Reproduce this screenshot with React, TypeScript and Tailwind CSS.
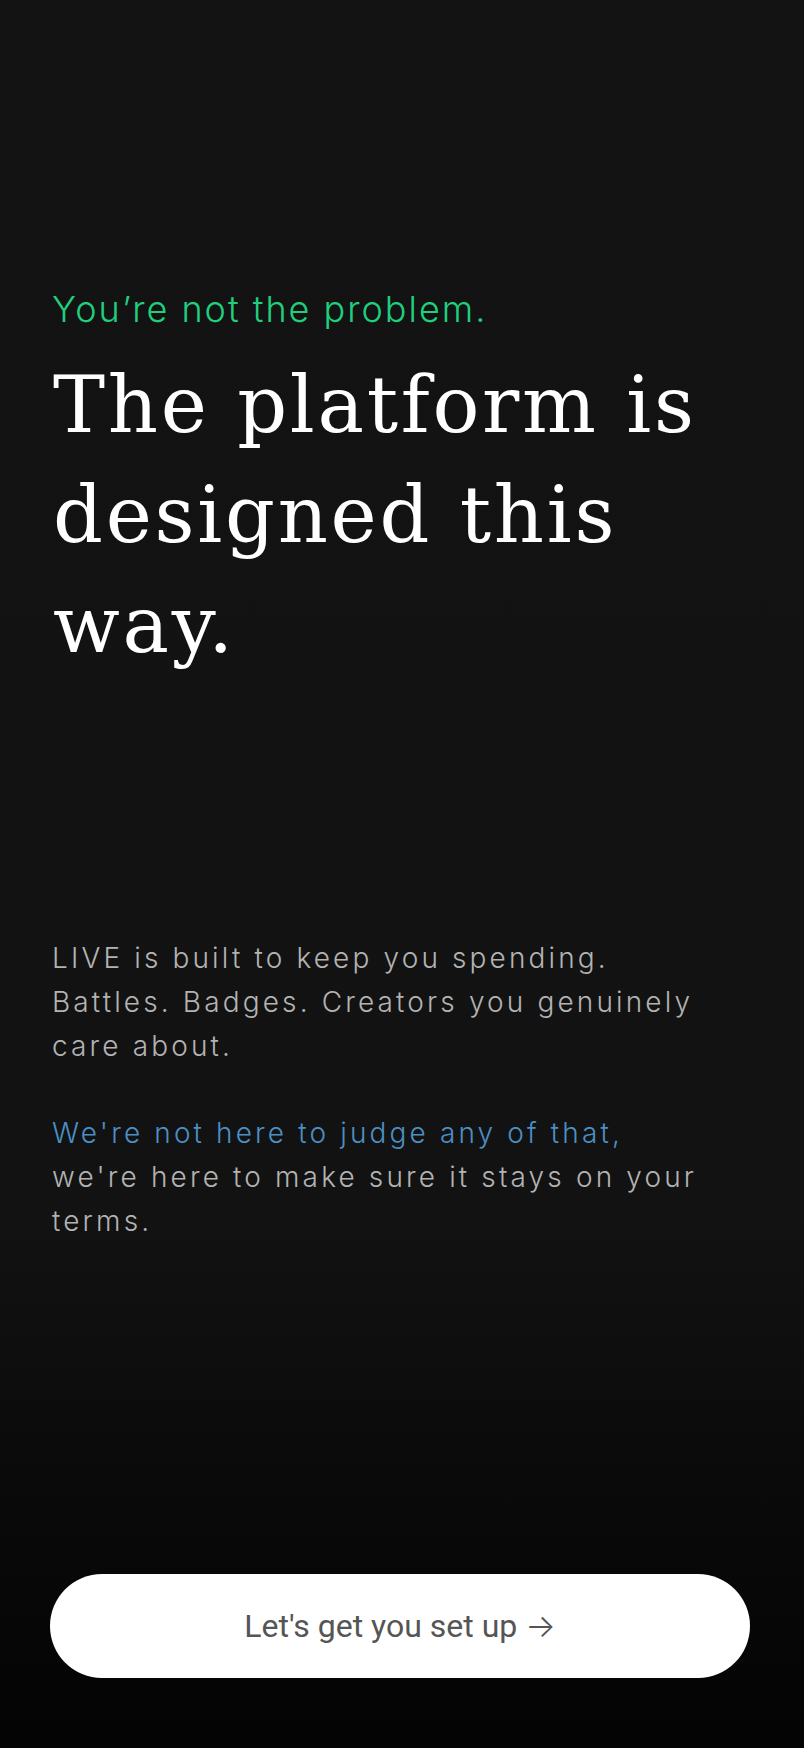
export default function App() {
  return (
    <div className="min-h-screen w-full flex flex-col bg-gradient-to-b from-[#131313] via-[#121212] via-70% to-[#040404] pl-[50px] pr-[54px] font-['Inter','Noto_Sans',sans-serif]">
      <p className="pt-[287px] pl-[2px] text-[36px] leading-[44px] text-[#1fcf7e] font-light tracking-[0.055em]">
        You’re not the problem.
      </p>
      <h1 className="mt-[19px] pl-[3px] font-['DejaVu_Serif',serif] text-[78px] leading-[110px] text-white tracking-[0.035em]">
        The platform is
        <br />
        designed this
        <br />
        way.
      </h1>

      <div className="mt-[256px] pl-[2px] -mr-[30px] whitespace-nowrap text-[28px] leading-[44px] font-light tracking-[0.112em] text-[#b3b3b3]">
        <p>
          LIVE is built to keep you spending.
          <br />
          Battles. Badges. Creators you genuinely
          <br />
          care about.
        </p>
        <p className="mt-[43px]">
          <span className="text-[#4b8fc4]">We're not here to judge any of that,</span>
          <br />
          we're here to make sure it stays on your
          <br />
          terms.
        </p>
      </div>

      <div className="flex-1" />

      <button className="mb-[70px] h-[104px] w-full rounded-full bg-white font-['Roboto','Noto_Sans',sans-serif] text-[32px] text-[#555555]">
        Let's get you set up <span className="font-['Inter',sans-serif] font-light">→</span>
      </button>
    </div>
  )
}
